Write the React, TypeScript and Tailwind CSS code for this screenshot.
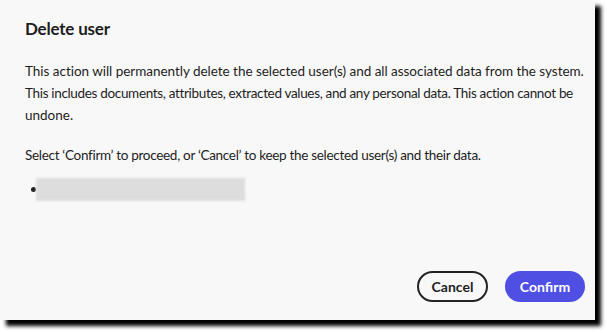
import React from "react";

export default function App() {
  return (
    <div className="w-[607px] h-[333px] bg-white" style={{ fontFamily: "Lato, 'Open Sans', sans-serif" }}>
      <div className="w-[595px] h-[320px] bg-[#f8f8f8] shadow-[6px_6px_4px_rgba(0,0,0,1)] flex flex-col pl-[25px] pr-[10px] pt-[17px] pb-[18px] text-[#1d1d1d]">
        <h2 className="text-[17px] font-bold leading-[24px] tracking-[-0.2px]">Delete user</h2>
        <div className="mt-[19px] text-[13.5px] leading-[22px] whitespace-nowrap">
          <p>
            <span className="tracking-[-0.03px]">This action will permanently delete the selected user(s) and all associated data from the system.</span>
            <br />
            <span className="tracking-[-0.33px]">This includes documents, attributes, extracted values, and any personal data. This action cannot be</span>
            <br />
            undone.
          </p>
          <p className="mt-[18px] tracking-[-0.3px]">Select ‘Confirm’ to proceed, or ‘Cancel’ to keep the selected user(s) and their data.</p>
          <div className="mt-[12px] flex items-center">
            <span className="ml-[6px] w-[5px] h-[5px] rounded-full bg-[#222222]" />
            <span className="ml-[0px] w-[209px] h-[23px] bg-[#dddddd] blur-[1px]" />
          </div>
        </div>
        <div className="mt-auto flex justify-end gap-[17px]">
          <button className="h-[31px] w-[71px] rounded-full border-2 border-[#222222] text-[14px] font-bold text-[#222222]">
            Cancel
          </button>
          <button className="h-[31px] w-[80px] rounded-full bg-[#4f4fe3] text-[14px] font-bold text-white">
            Confirm
          </button>
        </div>
      </div>
    </div>
  );
}
